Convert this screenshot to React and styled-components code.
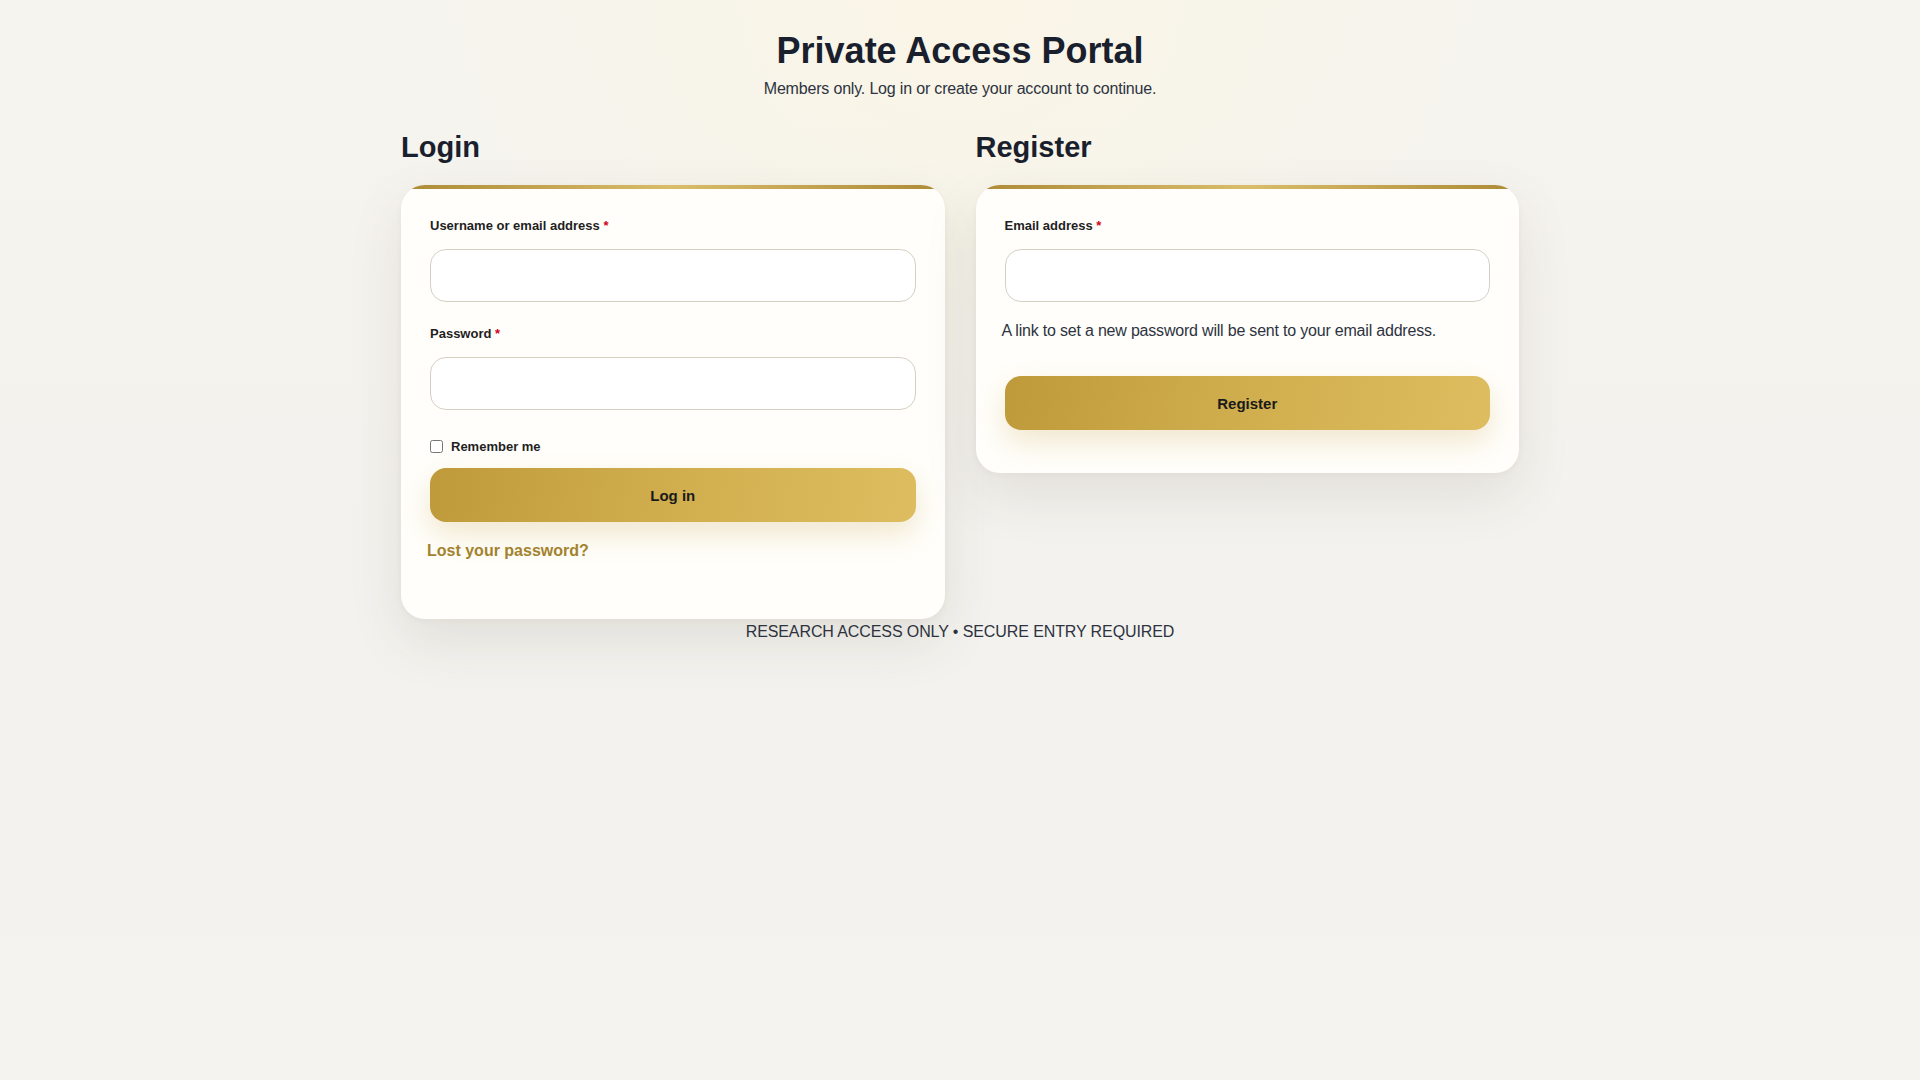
import styled, { createGlobalStyle } from "styled-components";

const GlobalStyle = createGlobalStyle`
  html, body {
    margin: 0;
    padding: 0;
  }

  body {
    font-family: "Liberation Sans", Arial, Helvetica, sans-serif;
    color: #2d3340;
    background: #f3f2ee;
  }
`;

const Page = styled.main`
  min-height: 100vh;
  box-sizing: border-box;
  padding-top: 29px;
  background:
    radial-gradient(ellipse 520px 420px at 50% 0%, #faf5e6 0%, rgba(250, 245, 230, 0) 100%),
    linear-gradient(180deg, #f6f4ee 0%, #f3f2ee 55%, #f4f3ef 100%);
`;

const Header = styled.header`
  text-align: center;
`;

const Title = styled.h1`
  margin: 0;
  font-size: 36px;
  line-height: 43px;
  font-weight: 700;
  color: #1a1f2e;
`;

const Subtitle = styled.p`
  margin: 5px 0 0;
  font-size: 16px;
  line-height: 24px;
  letter-spacing: -0.18px;
  color: #2d3340;
`;

const Columns = styled.div`
  width: 1118px;
  margin: 29px auto 0;
  display: grid;
  grid-template-columns: 1fr 1fr;
  column-gap: 31px;
  align-items: start;
`;

const Column = styled.section`
  display: flex;
  flex-direction: column;
`;

const SectionTitle = styled.h2`
  margin: 0 0 20px;
  font-size: 29px;
  line-height: 35px;
  font-weight: 700;
  color: #1a1f2e;
`;

const Card = styled.div`
  position: relative;
  overflow: hidden;
  box-sizing: border-box;
  padding: 31px 29px 30px;
  border-radius: 24px;
  background: #fffefa;
  box-shadow: 0 22px 55px rgba(70, 60, 35, 0.1), 0 2px 6px rgba(70, 60, 35, 0.04);

  &::before {
    content: "";
    position: absolute;
    top: 0;
    left: 0;
    right: 0;
    height: 4px;
    background: linear-gradient(90deg, #ad8a36 0%, #d9bd6a 50%, #ad8a36 100%);
  }
`;

const Field = styled.div`
  display: flex;
  flex-direction: column;
  margin-bottom: ${(p) => p.$gap || 0}px;
`;

const Label = styled.label`
  font-size: 13px;
  line-height: 20px;
  font-weight: 700;
  color: #1f1f1f;
  margin-bottom: 13px;
`;

const Required = styled.span`
  color: #d0021b;
`;

const Input = styled.input`
  box-sizing: border-box;
  width: 100%;
  height: 53px;
  padding: 0 16px;
  border: 1px solid #d6d0c3;
  border-radius: 16px;
  background: #fff;
  font: inherit;
  font-size: 16px;
  outline: none;
`;

const CheckRow = styled.label`
  display: flex;
  align-items: center;
  gap: 8px;
  margin-top: 26px;
  height: 20px;
  font-size: 13px;
  font-weight: 700;
  color: #1f1f1f;
`;

const Checkbox = styled.input`
  width: 13px;
  height: 13px;
  margin: 0;
`;

const GoldButton = styled.button`
  width: 100%;
  height: 54px;
  margin-top: ${(p) => p.$top}px;
  border: 0;
  border-radius: 16px;
  background: linear-gradient(100deg, #bf9a3b 0%, #d2b050 55%, #ddbd5f 100%);
  box-shadow: 0 12px 28px rgba(196, 160, 70, 0.24);
  font-family: inherit;
  font-size: 15px;
  font-weight: 700;
  color: #1a1a1a;
  cursor: pointer;
`;

const LostLink = styled.a`
  display: block;
  margin: 17px 0 26px -3px;
  font-size: 16px;
  line-height: 24px;
  font-weight: 700;
  color: #a3822e;
  text-decoration: none;
`;

const Hint = styled.p`
  margin: 17px 0 0 -3px;
  font-size: 16px;
  line-height: 24px;
  letter-spacing: -0.2px;
  color: #2d3340;
`;

const RegisterButton = styled(GoldButton)`
  margin-bottom: 13px;
`;

const Footer = styled.footer`
  text-align: center;
  font-size: 16px;
  line-height: 26px;
  letter-spacing: -0.1px;
  color: #2d3340;
  text-transform: uppercase;
`;

export default function App() {
  return (
    <>
      <GlobalStyle />
      <Page>
        <Header>
          <Title>Private Access Portal</Title>
          <Subtitle>Members only. Log in or create your account to continue.</Subtitle>
        </Header>

        <Columns>
          <Column>
            <SectionTitle>Login</SectionTitle>
            <Card>
              <Field $gap={22}>
                <Label htmlFor="username">
                  Username or email address <Required>*</Required>
                </Label>
                <Input id="username" type="text" />
              </Field>
              <Field>
                <Label htmlFor="password">
                  Password <Required>*</Required>
                </Label>
                <Input id="password" type="password" />
              </Field>
              <CheckRow>
                <Checkbox type="checkbox" />
                Remember me
              </CheckRow>
              <GoldButton $top={12}>Log in</GoldButton>
              <LostLink href="#">Lost your password?</LostLink>
            </Card>
          </Column>

          <Column>
            <SectionTitle>Register</SectionTitle>
            <Card>
              <Field>
                <Label htmlFor="reg-email">
                  Email address <Required>*</Required>
                </Label>
                <Input id="reg-email" type="email" />
              </Field>
              <Hint>A link to set a new password will be sent to your email address.</Hint>
              <RegisterButton $top={33}>Register</RegisterButton>
            </Card>
          </Column>
        </Columns>

        <Footer>Research access only • Secure entry required</Footer>
      </Page>
    </>
  );
}
